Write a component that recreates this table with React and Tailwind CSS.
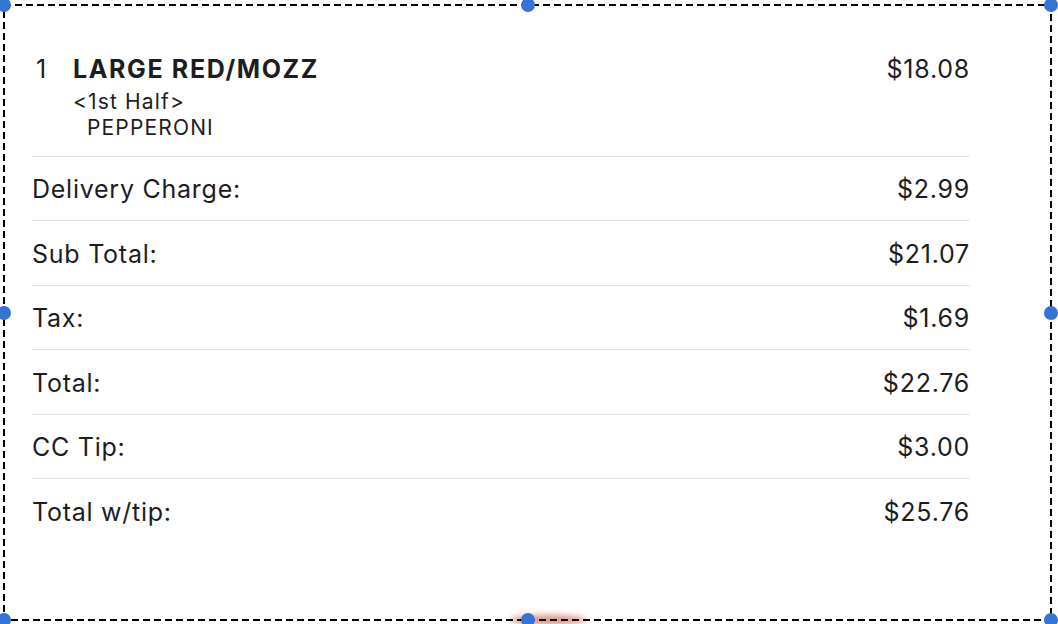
const rows = [
  { label: 'Delivery Charge:', value: '$2.99' },
  { label: 'Sub Total:', value: '$21.07' },
  { label: 'Tax:', value: '$1.69' },
  { label: 'Total:', value: '$22.76' },
  { label: 'CC Tip:', value: '$3.00' },
  { label: 'Total w/tip:', value: '$25.76' },
];

const handles = [
  [4, 5], [528, 5], [1051, 5],
  [4, 313], [1051, 313],
  [4, 620], [528, 620], [1051, 620],
];

const SelectionFrame = () => (
  <svg className="pointer-events-none absolute inset-0" width="1058" height="624" viewBox="0 0 1058 624">
    <defs>
      <filter id="smear" x="-50%" y="-50%" width="200%" height="200%">
        <feGaussianBlur stdDeviation="3" />
      </filter>
    </defs>
    <ellipse cx="548" cy="620" rx="38" ry="5" fill="#c0392b" opacity="0.55" filter="url(#smear)" />
    <rect x="4" y="5" width="1047" height="615" fill="none" stroke="#000" strokeWidth="2" strokeDasharray="7 4" />
    {handles.map(([x, y]) => (
      <circle key={`${x}-${y}`} cx={x} cy={y} r="7" fill="#3474d4" />
    ))}
  </svg>
);

export default function App() {
  return (
    <div className="relative h-[624px] w-[1058px] overflow-hidden bg-white font-['Inter','Liberation_Sans',sans-serif] text-[#1d1d1f]">
      <div className="ml-[32px] w-[938px] pt-[55px]">
        <div className="border-b border-[#e2e2e2] pb-[15px]">
          <div className="flex items-start justify-between text-[25px] leading-[28px] tracking-[0.03em]">
            <div className="flex">
              <span className="w-[41px] pl-[4px]">1</span>
              <span className="font-bold tracking-[0.065em]">LARGE RED/MOZZ</span>
            </div>
            <span>$18.08</span>
          </div>
          <div className="mt-[6px] pl-[41px] text-[21px] leading-[26px] tracking-[0.055em]">
            <div>&lt;1st Half&gt;</div>
            <div className="pl-[14px]">PEPPERONI</div>
          </div>
        </div>
        {rows.map((row, i) => (
          <div
            key={row.label}
            className={`flex h-[64.4px] items-center justify-between pt-[3px] text-[25px] tracking-[0.03em] ${i < rows.length - 1 ? 'border-b border-[#e2e2e2]' : ''}`}
          >
            <span>{row.label}</span>
            <span>{row.value}</span>
          </div>
        ))}
      </div>
      <SelectionFrame />
    </div>
  );
}
